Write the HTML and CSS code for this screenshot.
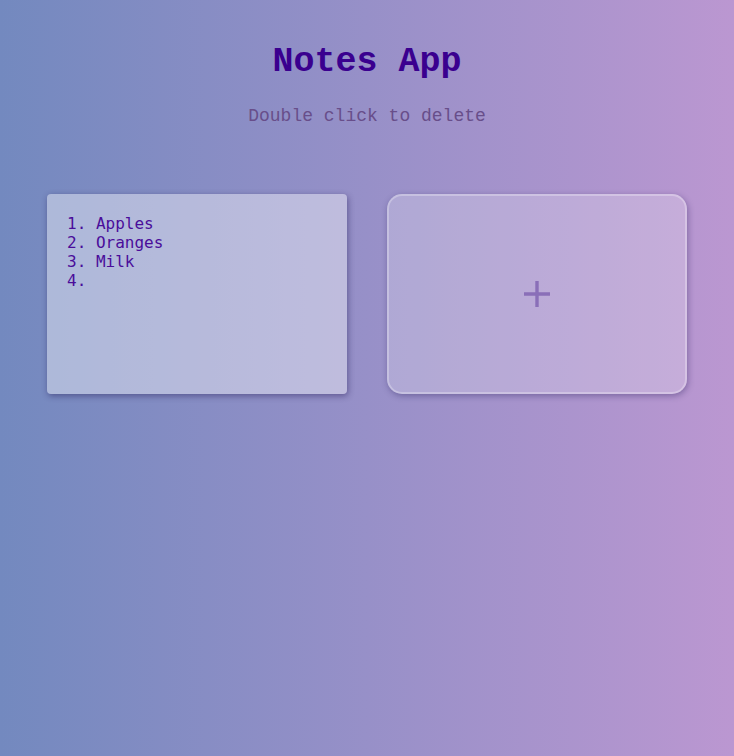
FILE: index.html
```html
<!DOCTYPE html>
<html lang="en">
<head>
<meta charset="utf-8">
<title>Notes App</title>
<link rel="stylesheet" href="styles.css">
</head>
<body>
<header class="header">
  <h1 class="title">Notes App</h1>
  <p class="subtitle">Double click to delete</p>
</header>
<main class="notes">
  <textarea class="note">1. Apples
2. Oranges
3. Milk
4. </textarea>
  <button class="add-note" type="button" aria-label="Add note">
    <svg width="26" height="26" viewBox="0 0 26 26" aria-hidden="true">
      <path d="M13 0 V26 M0 13 H26" stroke="#8a6fb8" stroke-width="3.4" fill="none"/>
    </svg>
  </button>
</main>
</body>
</html>
```
FILE: styles.css
```css
html, body {
  margin: 0;
  padding: 0;
  height: 100%;
}
body {
  background: linear-gradient(to right, #7389bf, #bb97d1);
  font-family: "Liberation Mono", "DejaVu Sans Mono", monospace;
}
.header {
  text-align: center;
  padding-top: 41px;
}
.title {
  margin: 0;
  font-size: 35px;
  line-height: 42px;
  font-weight: bold;
  color: #3a008f;
}
.subtitle {
  margin: 22px 0 0;
  font-size: 18px;
  line-height: 22px;
  color: #684e8a;
}
.notes {
  display: flex;
  justify-content: center;
  gap: 40px;
  margin-top: 67px;
}
.note {
  box-sizing: border-box;
  width: 300px;
  height: 200px;
  padding: 20px 20px;
  border: none;
  border-radius: 4px;
  background: rgba(255, 255, 255, 0.4);
  box-shadow: 1px 2px 6px rgba(30, 20, 80, 0.45);
  font-family: "DejaVu Sans Mono", monospace;
  font-size: 16px;
  line-height: 19px;
  color: #4a0d9a;
  resize: none;
  outline: none;
}
.add-note {
  box-sizing: border-box;
  width: 300px;
  height: 200px;
  display: flex;
  align-items: center;
  justify-content: center;
  padding: 0;
  border: 2px solid rgba(255, 255, 255, 0.28);
  border-radius: 15px;
  background: rgba(255, 255, 255, 0.22);
  box-shadow: 1px 2px 6px rgba(30, 20, 80, 0.35);
  cursor: pointer;
}
```
